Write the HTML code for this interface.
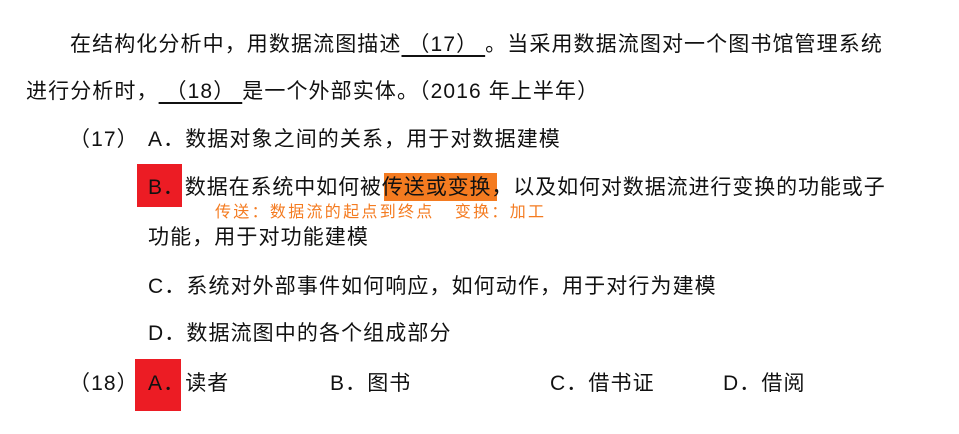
<!DOCTYPE html>
<html><head><meta charset="utf-8"><style>
body{margin:0;width:959px;height:434px;background:#fff;position:relative;overflow:hidden;font-family:"Liberation Sans","Noto Sans CJK SC",sans-serif;color:#111;}
.t{position:absolute;white-space:nowrap;font-size:21px;letter-spacing:1.1px;line-height:24px;}
.u{text-decoration:underline;text-decoration-thickness:2px;text-underline-offset:4px;}
.box{position:absolute;background:#ec1c24;}
.or{position:absolute;background:#f47b20;}
.an{position:absolute;white-space:nowrap;font-size:16px;line-height:18px;color:#f47b20;letter-spacing:2.3px;}
</style></head><body>
<div class="box" style="left:137px;top:164px;width:45px;height:43px"></div>
<div class="or" style="left:384px;top:173px;width:113px;height:28px"></div>
<div class="box" style="left:135px;top:359px;width:46px;height:52px"></div>
<div class="t" style="left:70px;top:33px">在结构化分析中，用数据流图描述<span class="u">&nbsp;（17）&nbsp;</span>。当采用数据流图对一个图书馆管理系统</div>
<div class="t" style="left:26px;top:80px">进行分析时，<span class="u">&nbsp;（18）&nbsp;</span>是一个外部实体。（2016 年上半年）</div>
<div class="t" style="left:69px;top:128px">（17）</div>
<div class="t" style="left:148px;top:128px">A．数据对象之间的关系，用于对数据建模</div>
<div class="t" style="left:148px;top:176px;letter-spacing:0.9px">B．数据在系统中如何被传送或变换，以及如何对数据流进行变换的功能或子</div>
<div class="an" style="left:215px;top:204px">传送：数据流的起点到终点&nbsp;&nbsp;&nbsp;变换：加工</div>
<div class="t" style="left:148px;top:226px">功能，用于对功能建模</div>
<div class="t" style="left:148px;top:275px">C．系统对外部事件如何响应，如何动作，用于对行为建模</div>
<div class="t" style="left:148px;top:322px">D．数据流图中的各个组成部分</div>
<div class="t" style="left:69px;top:372px">（18）</div>
<div class="t" style="left:148px;top:372px">A．读者</div>
<div class="t" style="left:330px;top:372px">B．图书</div>
<div class="t" style="left:550px;top:372px">C．借书证</div>
<div class="t" style="left:723px;top:372px">D．借阅</div>
</body></html>
